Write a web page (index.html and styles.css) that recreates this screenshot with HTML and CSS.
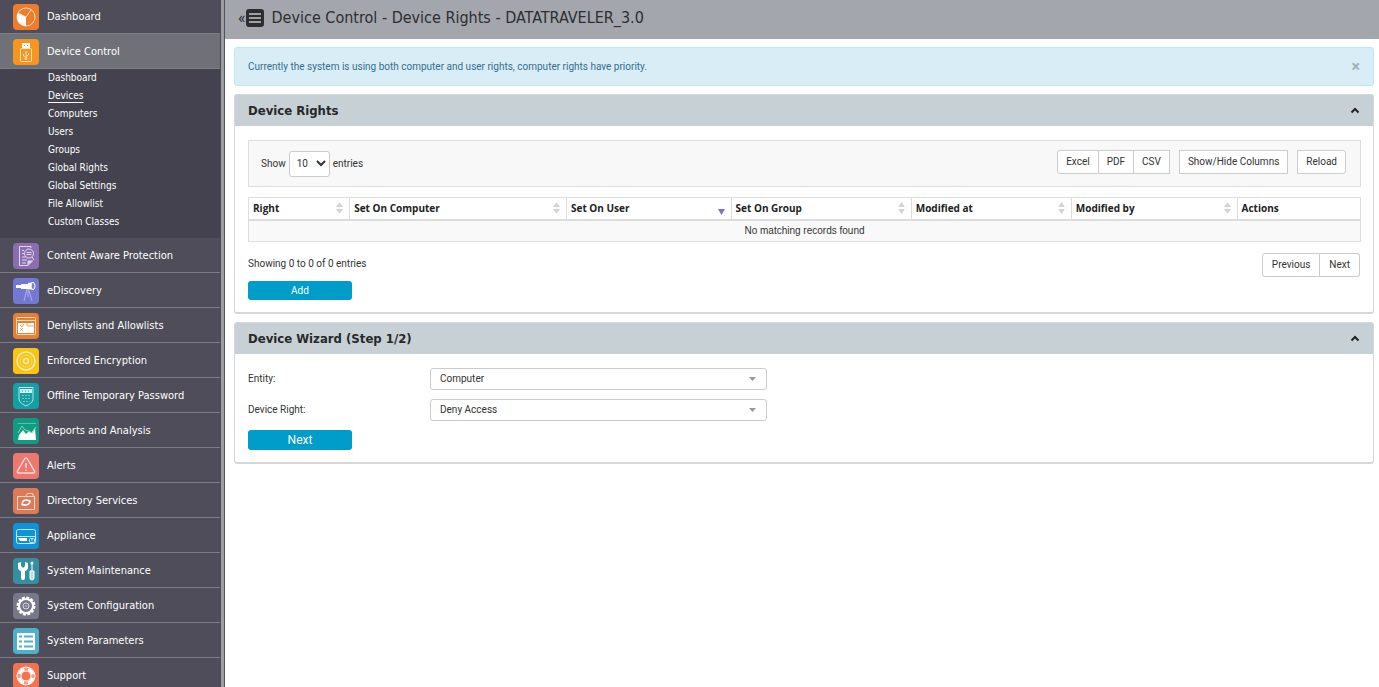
FILE: index.html
```html
<!DOCTYPE html>
<html lang="en">

<head>
    <meta charset="UTF-8">
    <meta name="viewport" content="width=device-width, initial-scale=1.0">
    <title>Device Control - Device Rights</title>
    <link rel="stylesheet" href="styles.css">
</head>

<body>
    <nav class="sidebar">
        <a class="nav-item first" href="#">
            <svg class="icon orange" viewBox="0 0 26 26">
                <circle cx="13" cy="13" r="9" fill="none" stroke="#fbd9c0" />
                <path d="M13 13L5 9a9 9 0 0 0 8 13z" fill="#fff" />
                <path d="M13 13l5-7M13 13L5 9" stroke="#fbd9c0" fill="none" />
            </svg>
            Dashboard
        </a>
        <a class="nav-item active" href="#">
            <svg class="icon amber" viewBox="0 0 26 26" fill="none" stroke="#fde3b8">
                <path d="M9 4h8v5H9z" fill="#fff" stroke="none" />
                <path d="M11 6h1v1h-1zM14 6h1v1h-1z" fill="#f6961f" stroke="none" />
                <rect x="7.500" y="9.500" width="11" height="13" rx="1" />
                <path d="M13 12v8M10.500 15v2l2.500 1.500M15.500 14v2L13 17.500" />
                <circle cx="13" cy="19.500" r="1" />
            </svg>
            Device Control
        </a>
        <div class="submenu">
            <a href="#">Dashboard</a>
            <a href="#" class="current">Devices</a>
            <a href="#">Computers</a>
            <a href="#">Users</a>
            <a href="#">Groups</a>
            <a href="#">Global Rights</a>
            <a href="#">Global Settings</a>
            <a href="#">File Allowlist</a>
            <a href="#">Custom Classes</a>
        </div>
        <a class="nav-item" href="#">
            <svg class="icon purple" viewBox="0 0 26 26" fill="none" stroke="#e3d6f0">
                <path d="M18 5V3.500H6.500v19H15l4-4V17" />
                <path d="M15 22v-4h4" fill="#e3d6f0" />
                <circle cx="16" cy="10.500" r="4.500" />
                <path d="M19 14l2 3M9 7.500h2M9 10.500h2M9 14h4M9 17h5M9 20h4M13.500 9.500h5M13.500 11.500h5" />
            </svg>
            Content Aware Protection
        </a>
        <a class="nav-item" href="#">
            <svg class="icon blue" viewBox="0 0 26 26">
                <path d="M3 7h5v3H3zM8 6h7v5H8zM15 5l6-1v8l-6-1z" fill="#fff" />
                <ellipse cx="20" cy="8" rx="2" ry="3.500" fill="#7d7fd6" stroke="#fff" />
                <path d="M14 11l-3 12M15 11v8M15.500 11L19 23" stroke="#aeb0ea" fill="none" />
            </svg>
            eDiscovery
        </a>
        <a class="nav-item" href="#">
            <svg class="icon rust" viewBox="0 0 26 26">
                <rect x="3.500" y="4.500" width="19" height="17" rx="1" fill="none" stroke="#fbd9c0" />
                <path d="M3 7.500h20" stroke="#fbd9c0" />
                <path d="M5 10h16v10H5z" fill="#fff" />
                <path d="M7 12l2 2 2-3M7 18l3-3M7 15l3 3M14 10v3h7" stroke="#efa673" fill="none" />
            </svg>
            Denylists and Allowlists
        </a>
        <a class="nav-item" href="#">
            <svg class="icon yellow" viewBox="0 0 26 26" fill="none" stroke="#fdedb0">
                <circle cx="13" cy="13" r="9" stroke-width="1.500" />
                <circle cx="13" cy="13" r="6" stroke="#fbdc63" />
                <circle cx="13" cy="13" r="2.500" stroke-width="1.500" />
            </svg>
            Enforced Encryption
        </a>
        <a class="nav-item" href="#">
            <svg class="icon teal" viewBox="0 0 26 26" fill="none" stroke="#b9e6e6">
                <path d="M6 4.500h14v11c0 4-4 6-7 7.500-3-1.500-7-3.500-7-7.500z" />
                <path d="M7 6h12v4H7z" fill="#d5f1f1" stroke="none" />
                <path d="M9 8h1M12 8h1M15 8h1" stroke="#13a0a4" />
                <path d="M9 12.500h8M9 15.500h8M10 18.500h6" stroke="#6cc5c7" stroke-dasharray="2 1" />
            </svg>
            Offline Temporary Password
        </a>
        <a class="nav-item" href="#">
            <svg class="icon green" viewBox="0 0 26 26">
                <path d="M5 5.500h18" stroke="#55c3ad" />
                <path d="M5 22l1-5 4-5 3 4 3-3 2 2 4-5 1 12z" fill="#fff" />
                <path d="M5 15l4-7 3 4 4 1 3 2 4-6" stroke="#7dd4c2" fill="none" />
            </svg>
            Reports and Analysis
        </a>
        <a class="nav-item" href="#">
            <svg class="icon coral" viewBox="0 0 26 26" fill="none" stroke="#fcd9d4" stroke-width="1.500">
                <path d="M13 5c1 0 1.500 1 2 2l6.500 11c.5 1 0 2-1 2h-15c-1 0-1.500-1-1-2L11 7c.5-1 1-2 2-2z" />
                <path d="M13 10v5M13 16.500V18" />
            </svg>
            Alerts
        </a>
        <a class="nav-item" href="#">
            <svg class="icon clay" viewBox="0 0 26 26" fill="none" stroke="#f9d8c8">
                <path d="M4.500 8.500h8l2-3h5l1 3h1v13h-17zM12.500 8.500h9" />
                <path d="M9.500 14.500a4 3 0 0 1 6-2M16.500 14.500a4 3 0 0 1-6 2" stroke="#fff" stroke-width="1.500" />
                <path d="M14 12h3.500v3.500zM12 17.500H8.500V14z" fill="#fff" stroke="none" />
            </svg>
            Directory Services
        </a>
        <a class="nav-item" href="#">
            <svg class="icon azure" viewBox="0 0 26 26" fill="none" stroke="#c9e8fa">
                <rect x="3.500" y="6.500" width="19" height="14" rx="2" />
                <path d="M3 13.500h20" />
                <path d="M5 15h9v3H7z" fill="#fff" stroke="none" />
                <rect x="16.500" y="15.500" width="5" height="4" rx="1" />
                <path d="M19 16v2" />
            </svg>
            Appliance
        </a>
        <a class="nav-item" href="#">
            <svg class="icon sea" viewBox="0 0 26 26">
                <path d="M5 5v4a4 4 0 0 0 3 4v7a2 2 0 0 0 4 0v-7a4 4 0 0 0 3-4V5l-3-1v4l-2 2-2-2V4z" fill="#fff" />
                <path d="M19 4v9" stroke="#fff" />
                <path d="M17 13h4v7a2 2 0 0 1-4 0z" fill="#b9dfe6" stroke="#fff" />
                <circle cx="19" cy="5" r="1.500" fill="#fff" />
            </svg>
            System Maintenance
        </a>
        <a class="nav-item" href="#">
            <svg class="icon grey" viewBox="0 0 26 26" fill="none" stroke="#fff">
                <circle cx="13" cy="13" r="7" stroke-width="2" />
                <circle cx="13" cy="13" r="8.500" stroke-width="2" stroke-dasharray="3 1.450" />
                <circle cx="13" cy="13" r="3" stroke="#d8d8e2" />
                <circle cx="13" cy="13" r="1" stroke="#a8a8b6" />
            </svg>
            System Configuration
        </a>
        <a class="nav-item" href="#">
            <svg class="icon cyan" viewBox="0 0 26 26">
                <rect x="4" y="5" width="18" height="17" rx="1" fill="#fff" />
                <path d="M6 8.500h3M6 13.500h3M6 18.500h3M11 8.500h9M11 13.500h9M11 18.500h9" stroke="#4fb0c9" stroke-width="2" />
            </svg>
            System Parameters
        </a>
        <a class="nav-item" href="#">
            <svg class="icon tomato" viewBox="0 0 26 26" fill="none" stroke="#fff">
                <circle cx="13" cy="13" r="7" stroke="#f79b80" stroke-width="3" />
                <circle cx="13" cy="13" r="7" stroke-width="3" stroke-dasharray="7 4" stroke-dashoffset="-2" />
                <circle cx="13" cy="13" r="9" />
                <circle cx="13" cy="13" r="5" />
            </svg>
            Support
        </a>
    </nav>

    <main class="main">
        <header class="topbar">
            <a class="collapse" href="#">«</a>
            <svg class="list-icon" viewBox="0 0 18 18">
                <rect width="18" height="18" rx="3" fill="#2d2e31" />
                <path d="M3 5h12M3 9h12M3 13h12" stroke="#c4c6ca" stroke-width="1.500" />
            </svg>
            <h1>Device Control - Device Rights - DATATRAVELER_3.0</h1>
        </header>

        <div class="content">
            <div class="alert">
                <span>Currently the system is using both computer and user rights, computer rights have priority.</span>
                <button class="close" type="button" aria-label="Close">×</button>
            </div>

            <section class="panel">
                <div class="panel-header">
                    <h2>Device Rights</h2>
                    <svg class="chevron" viewBox="0 0 10 7"><path d="M1.500 5.500L5 2l3.500 3.500" /></svg>
                </div>
                <div class="panel-body">
                    <div class="toolbar">
                        <label class="length">Show
                            <select class="length-select">
                                <option>10</option>
                                <option>25</option>
                                <option>50</option>
                            </select>
                            entries
                        </label>
                        <div class="tools">
                            <div class="btn-group">
                                <button type="button">Excel</button>
                                <button type="button">PDF</button>
                                <button type="button">CSV</button>
                            </div>
                            <button class="btn" type="button">Show/Hide Columns</button>
                            <button class="btn" type="button">Reload</button>
                        </div>
                    </div>

                    <table class="rights">
                        <thead>
                            <tr>
                                <th class="col-right sort">Right</th>
                                <th class="col-computer sort">Set On Computer</th>
                                <th class="col-user sorted">Set On User</th>
                                <th class="col-group sort">Set On Group</th>
                                <th class="col-at sort">Modified at</th>
                                <th class="col-by sort">Modified by</th>
                                <th>Actions</th>
                            </tr>
                        </thead>
                        <tbody>
                            <tr>
                                <td colspan="7">No matching records found</td>
                            </tr>
                        </tbody>
                    </table>

                    <div class="table-footer">
                        <span>Showing 0 to 0 of 0 entries</span>
                        <div class="btn-group pager">
                            <button type="button">Previous</button>
                            <button type="button">Next</button>
                        </div>
                    </div>
                    <button class="primary" type="button">Add</button>
                </div>
            </section>

            <section class="panel">
                <div class="panel-header">
                    <h2>Device Wizard (Step 1/2)</h2>
                    <svg class="chevron" viewBox="0 0 10 7"><path d="M1.500 5.500L5 2l3.500 3.500" /></svg>
                </div>
                <form class="panel-body">
                    <div class="field">
                        <label for="entity">Entity:</label>
                        <select id="entity">
                            <option>Computer</option>
                            <option>User</option>
                            <option>Group</option>
                        </select>
                    </div>
                    <div class="field">
                        <label for="right">Device Right:</label>
                        <select id="right">
                            <option>Deny Access</option>
                            <option>Allow Access</option>
                        </select>
                    </div>
                    <button class="primary large" type="button">Next</button>
                </form>
            </section>
        </div>
    </main>
</body>

</html>
```
FILE: styles.css
```css
* {
    box-sizing: border-box;
}

body {
    display: flex;
    height: 100vh;
    margin: 0;
    overflow: hidden;
    background-color: #fff;
    color: #333;
    font-family: Tahoma, Roboto, "Noto Sans", sans-serif;
    font-size: 10px;
    line-height: 14px;
}

a {
    color: inherit;
    text-decoration: none;
}

button,
select {
    font: inherit;
    color: inherit;
}

button {
    cursor: pointer;
}

/* Sidebar */
.sidebar {
    flex: 0 0 225px;
    overflow: hidden;
    background-color: #4e4d59;
    border-right: 1px solid #55555f;
    box-shadow: inset -3px 0 #9c9ca3;
    padding-right: 4px;
    color: #fff;
    font-family: Tahoma, "DejaVu Sans Condensed", sans-serif;
}

.nav-item {
    display: flex;
    align-items: center;
    gap: 8px;
    height: 35px;
    padding-top: 2px;
    padding-left: 13px;
    border-bottom: 1px solid #7d7d86;
    font-size: 11px;
}

.nav-item.first {
    height: 34px;
    padding-top: 0;
}

.nav-item.active {
    background-color: #707078;
}

.icon {
    width: 26px;
    height: 26px;
    border-radius: 4px;
}

.orange { background-color: #ec7d2d; }
.amber { background-color: #f6961f; }
.purple { background-color: #8b6db0; }
.blue { background-color: #7577d4; }
.rust { background-color: #e67f32; }
.yellow { background-color: #f9c515; }
.teal { background-color: #13a0a4; }
.green { background-color: #109c82; }
.coral { background-color: #ee7770; }
.clay { background-color: #dd7a5a; }
.azure { background-color: #0f93d8; }
.sea { background-color: #348fa2; }
.grey { background-color: #77778a; }
.cyan { background-color: #4fb0c9; }
.tomato { background-color: #f27350; }

.submenu {
    display: flex;
    flex-direction: column;
    align-items: flex-start;
    height: 169px;
    padding-left: 48px;
    background-color: #43424e;
    line-height: 18px;
}

.submenu .current {
    text-decoration: underline;
    text-underline-offset: 3px;
}

/* Page header */
.main {
    flex: 1;
    min-width: 0;
}

.topbar {
    display: flex;
    align-items: center;
    height: 39px;
    padding: 0 13px 3px;
    background-color: #a3a6ac;
    color: #2d2e31;
}

.collapse {
    font-size: 16px;
}

.list-icon {
    width: 18px;
    height: 18px;
    margin-right: 8px;
}

h1 {
    margin: 0;
    font-family: Tahoma, "DejaVu Sans Condensed", sans-serif;
    font-size: 16px;
    font-weight: normal;
    line-height: 20px;
}

.content {
    padding: 8px 5px 8px 9px;
}

.alert {
    display: flex;
    align-items: center;
    justify-content: space-between;
    height: 39px;
    padding: 0 13px;
    border: 1px solid #bce8f1;
    border-radius: 3px;
    background-color: #d9edf7;
    color: #31708f;
}

.close {
    padding: 0;
    border: none;
    background: none;
    color: #a3b2ba;
    font-size: 16px;
    font-weight: bold;
}

/* Panels */
.panel {
    margin-top: 8px;
    border: 1px solid #d5d8da;
    border-bottom-width: 2px;
    border-radius: 3px;
}

.panel-header {
    display: flex;
    align-items: center;
    justify-content: space-between;
    height: 31px;
    padding: 0 13px;
    background-color: #c7d0d4;
}

h2 {
    margin: 0;
    font-family: Tahoma, "DejaVu Sans Condensed", sans-serif;
    font-size: 13px;
    line-height: 16px;
    color: #26292b;
}

.chevron {
    width: 10px;
    height: 7px;
    fill: none;
    stroke: #222;
    stroke-width: 2;
}

.panel-body {
    padding: 14px 12px 12px 13px;
}

.toolbar {
    display: flex;
    align-items: center;
    justify-content: space-between;
    height: 47px;
    padding: 0 14px 0 12px;
    border: 1px solid #ddd;
    background-color: #f8f8f8;
}

.length {
    display: flex;
    align-items: center;
    gap: 3px;
}

.length-select {
    appearance: none;
    width: 41px;
    height: 26px;
    padding: 0 7px;
    border: 1px solid #ccc;
    border-radius: 3px;
    background: #fff url("data:image/svg+xml,%3Csvg xmlns='http://www.w3.org/2000/svg' width='10' height='7'%3E%3Cpath d='M1 1l4 4 4-4' fill='none' stroke='%23333' stroke-width='2'/%3E%3C/svg%3E") no-repeat right 3px center;
}

.tools {
    display: flex;
    gap: 9px;
    margin-bottom: 4px;
}

.btn,
.btn-group button {
    height: 24px;
    padding: 0 8px;
    border: 1px solid #ccc;
    background-color: #fff;
}

.btn:last-child {
    border-radius: 0 3px 3px 0;
}

.btn-group {
    display: flex;
}

.btn-group button + button {
    border-left: none;
}

.btn-group button:first-child {
    border-radius: 3px 0 0 3px;
}

.rights {
    width: 100%;
    margin-top: 10px;
    border-collapse: collapse;
    table-layout: fixed;
}

.rights th {
    height: 22px;
    padding: 0 4px;
    border: 1px solid #ddd;
    border-bottom: 2px solid #ddd;
    text-align: left;
    color: #222;
    font-family: Tahoma, "Open Sans", sans-serif;
}

.rights td {
    height: 22px;
    padding: 0;
    border: 1px solid #ddd;
    background-color: #f9f9f9;
    font-family: "Liberation Sans", Arial, sans-serif;
    text-align: center;
}

.rights .sort {
    background: url("data:image/svg+xml,%3Csvg xmlns='http://www.w3.org/2000/svg' width='7' height='12' fill='%23d4d4d4'%3E%3Cpath d='M0 5l3.500-5L7 5zM0 7l3.500 5L7 7z'/%3E%3C/svg%3E") no-repeat right 6px center;
}

.rights .sorted {
    background: url("data:image/svg+xml,%3Csvg xmlns='http://www.w3.org/2000/svg' width='7' height='6' fill='%237376d0'%3E%3Cpath d='M0 0h7L3.500 6z'/%3E%3C/svg%3E") no-repeat right 6px bottom 4px;
}

.col-right { width: 9.1%; }
.col-computer { width: 19.5%; }
.col-user { width: 14.8%; }
.col-group { width: 16.2%; }
.col-at { width: 14.4%; }
.col-by { width: 14.9%; }

.table-footer {
    display: flex;
    justify-content: space-between;
    height: 24px;
    margin: 11px 1px 4px 0;
    line-height: 22px;
}

.btn-group.pager button {
    padding: 0 9px;
}

.pager button:last-child {
    border-radius: 0 3px 3px 0;
}

.primary {
    display: block;
    width: 104px;
    height: 19px;
    padding: 0;
    border: none;
    border-radius: 3px;
    background-color: #009dca;
    color: #fff;
}

.primary.large {
    height: 20px;
    font-size: 12px;
}

/* Wizard form */
.field {
    display: flex;
    align-items: center;
    margin-bottom: 9px;
}

.field label {
    width: 182px;
}

.field select {
    appearance: none;
    width: 337px;
    height: 22px;
    padding: 0 9px;
    border: 1px solid #ccc;
    border-radius: 3px;
    background: #fff url("data:image/svg+xml,%3Csvg xmlns='http://www.w3.org/2000/svg' width='7' height='4' fill='%23999'%3E%3Cpath d='M0 0h7L3.500 4z'/%3E%3C/svg%3E") no-repeat right 10px center;
}
```
